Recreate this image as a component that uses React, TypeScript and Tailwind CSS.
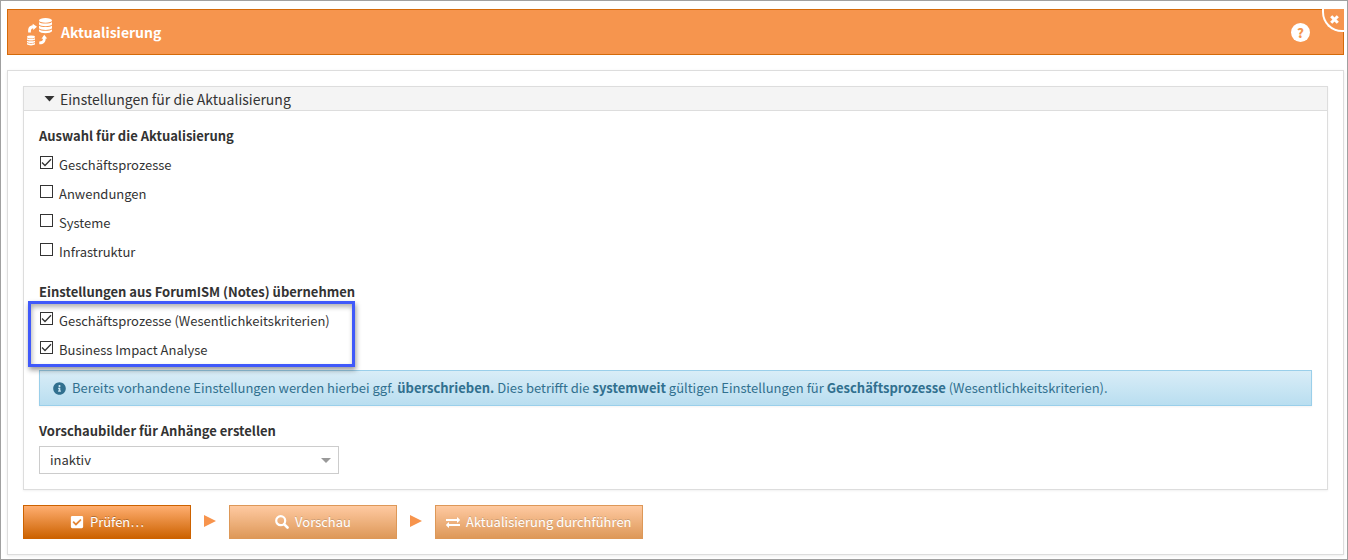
import React, { useState } from "react";
import { FaCheckSquare, FaInfoCircle } from "react-icons/fa";

const assets = ["Geschäftsprozesse", "Anwendungen", "Systeme", "Infrastruktur"];
const notesSettings = ["Geschäftsprozesse (Wesentlichkeitskriterien)", "Business Impact Analyse"];

function DatabaseSyncIcon() {
    return (
        <svg width="26" height="28" viewBox="0 0 26 28" fill="#fff" aria-hidden="true">
            <ellipse cx="18.5" cy="2.4" rx="6.5" ry="2.4" />
            <path d="M12 3.900c1.500 2 11.500 2 13 0v2.700c-1.500 2.300-11.500 2.300-13 0z" />
            <path d="M12 7.600c1.500 2 11.500 2 13 0v2.700c-1.500 2.300-11.500 2.300-13 0z" />
            <path d="M12 11.300c1.500 2 11.500 2 13 0v2c-1.500 2.600-11.500 2.600-13 0z" />
            <ellipse cx="4" cy="19" rx="4" ry="1.400" />
            <path d="M0 20c1 1.200 7 1.200 8 0v1.500c-1 1.300-7 1.300-8 0z" />
            <path d="M0 22.400c1 1.200 7 1.200 8 0v1.500c-1 1.300-7 1.300-8 0z" />
            <path d="M0 24.800c1 1.200 7 1.200 8 0v1.500c-1 1.500-7 1.500-8 0z" />
            <path d="M1.200 14.500c-.5-4.500 1-7 4.500-7.300V5.800l4.300 3-3.800 3.200v-1.700c-2 .2-2.500 2-2.300 4.200z" />
            <path d="M12.300 23.500c2.700 0 3.700-1.200 3.700-2.700h-1.500l2.700-4 3 3.700h-1.500c0 4-2.400 6-6.400 5.800z" />
        </svg>
    );
}

function CloseIcon() {
    return (
        <svg width="9" height="9" viewBox="0 0 9 9" fill="none" stroke="currentColor" strokeWidth="3" aria-hidden="true">
            <path d="M1.200 1.200l6.600 6.600M7.800 1.200L1.200 7.800" />
        </svg>
    );
}

function SearchIcon() {
    return (
        <svg width="14" height="14" viewBox="0 0 14 14" fill="none" stroke="currentColor" aria-hidden="true">
            <circle cx="5.700" cy="5.700" r="4.500" strokeWidth="2.200" />
            <path d="M9.300 9.300l3.200 3.200" strokeWidth="2.600" strokeLinecap="round" />
        </svg>
    );
}

function ExchangeIcon() {
    return (
        <svg width="14" height="14" viewBox="0 0 1792 1792" fill="currentColor" aria-hidden="true">
            <path d="M1792 1184v192q0 13-9.500 22.500t-22.500 9.500h-1376v192q0 13-9.500 22.500t-22.500 9.500q-12 0-24-10l-319-320q-9-9-9-22 0-14 9-23l320-320q9-9 23-9 13 0 22.500 9.500t9.500 22.500v192h1376q13 0 22.500 9.500t9.500 22.500zm0-544q0 14-9 23l-320 320q-9 9-23 9-13 0-22.500-9.500t-9.500-22.500v-192h-1376q-13 0-22.500-9.500t-9.500-22.500v-192q0-13 9.500-22.500t22.500-9.500h1376v-192q0-14 9-23t23-9q12 0 24 10l319 319q9 9 9 23z" />
        </svg>
    );
}

function StepArrow() {
    return (
        <svg width="12" height="12" viewBox="0 0 12 12" fill="#f7944d" className="mx-[13px] mb-0.5 shrink-0" aria-hidden="true">
            <path d="M0 0l12 6-12 6z" />
        </svg>
    );
}

function CheckRow({ label, checked, onChange }: { label: string, checked: boolean, onChange: () => void }) {
    return (
        <label className="flex h-[29px] w-fit gap-1.5 pl-px">
            <span className="mt-[5px] grid size-[13px]">
                <input
                    type="checkbox"
                    className="col-start-1 row-start-1 size-[13px] appearance-none border border-[#333] bg-white"
                    checked={checked}
                    onChange={onChange}
                />
                {checked ? (
                    <svg width="13" height="13" viewBox="0 0 13 13" fill="none" stroke="#333" strokeWidth="1.300" className="pointer-events-none col-start-1 row-start-1">
                        <path d="M2 6.500l3 3 6-6.200" />
                    </svg>
                ) : null}
            </span>
            <span className="leading-[27px]">{label}</span>
        </label>
    );
}

export default function App() {
    const [selected, setSelected] = useState<string[]>([assets[0], ...notesSettings]);
    const [preview, setPreview] = useState("inaktiv");

    const toggle = (name: string) => {
        setSelected(selected.includes(name) ? selected.filter((s) => s !== name) : [...selected, name]);
    };

    const renderRow = (name: string) => (
        <CheckRow key={name} label={name} checked={selected.includes(name)} onChange={() => toggle(name)} />
    );

    return (
        <div className="border border-[#a0a0a0] bg-white px-1.5 pt-2 pb-1 pr-[3px] font-['Noto_Sans_CJK_SC','Open_Sans',sans-serif] text-[13px] leading-5 text-[#333]">
            <header className="relative flex h-[46px] items-center border border-[#d46a0a] bg-[#f6954e] pl-[19px] text-white">
                <DatabaseSyncIcon />
                <h1 className="ml-2 text-sm font-bold">Aktualisierung</h1>
                <button type="button" aria-label="Hilfe" className="mr-[33px] ml-auto size-[19px] rounded-full bg-white text-[13px] leading-[19px] font-black text-[#f6954e]">
                    ?
                </button>
                <button type="button" aria-label="Schließen" className="absolute -top-px -right-px flex h-[23px] w-[22px] items-center justify-center rounded-bl-[20px] border-b-2 border-l-2 border-white bg-[#f6954e]">
                    <CloseIcon />
                </button>
            </header>

            <main className="mt-[15px] border border-[#ddd] p-[15px] shadow-[0_1px_3px_rgba(0,0,0,0.08)]">
                <section className="border border-[#ddd] shadow-[0_1px_2px_rgba(0,0,0,0.06)]">
                    <h2 className="border-b border-[#ddd] bg-[#f4f4f4]">
                        <button type="button" className="flex h-[23px] w-full items-center gap-[5px] pl-5 text-sm">
                            <svg width="11" height="6" viewBox="0 0 11 6" fill="#333" aria-hidden="true">
                                <path d="M0.500 0h10l-5 5.500z" />
                            </svg>
                            Einstellungen für die Aktualisierung
                        </button>
                    </h2>
                    <div className="p-[15px]">
                        <h3 className="mb-[5px] font-bold">Auswahl für die Aktualisierung</h3>
                        {assets.map(renderRow)}

                        <h3 className="mt-[15px] mb-[5px] font-bold">Einstellungen aus ForumISM (Notes) übernehmen</h3>
                        <div className="relative">
                            {notesSettings.map(renderRow)}
                            <div className="pointer-events-none absolute -top-1.5 -left-[11px] h-[66px] w-[327px] border-3 border-[#4059fa] shadow-[1px_3px_5px_rgba(0,0,0,0.4),inset_1px_3px_5px_rgba(0,0,0,0.3)]" />
                        </div>

                        <div role="note" className="mt-[5px] flex min-h-9 items-center gap-1.5 border border-[#9acfea] bg-linear-to-b/srgb from-[#d9edf7] to-[#b9def0] px-[13px] text-[#31708f] shadow-[0_1px_2px_rgba(0,0,0,0.05)]">
                            <FaInfoCircle size={13} className="shrink-0" />
                            <p>
                                Bereits vorhandene Einstellungen werden hierbei ggf. <b>überschrieben.</b> Dies betrifft die <b>systemweit</b> gültigen Einstellungen für <b>Geschäftsprozesse</b> (Wesentlichkeitskriterien).
                            </p>
                        </div>

                        <label htmlFor="preview" className="mt-[15px] mb-[5px] block font-bold">Vorschaubilder für Anhänge erstellen</label>
                        <div className="grid w-[300px] items-center">
                            <select
                                id="preview"
                                className="col-start-1 row-start-1 h-7 appearance-none border border-[#ccc] bg-white px-2.5"
                                value={preview}
                                onChange={(e) => setPreview(e.target.value)}
                            >
                                <option>inaktiv</option>
                                <option>aktiv</option>
                            </select>
                            <svg width="10" height="5" viewBox="0 0 10 5" fill="#999" className="pointer-events-none col-start-1 row-start-1 mr-2 justify-self-end" aria-hidden="true">
                                <path d="M0 0h10L5 5z" />
                            </svg>
                        </div>
                    </div>
                </section>

                <div className="mt-[15px] flex items-center">
                    <button type="button" className="flex h-[34px] w-[168px] items-center justify-center gap-1.5 border border-[#cc6200] bg-linear-to-b/srgb from-[#ffae70] to-[#cc6200] text-white [text-shadow:0_-1px_0_rgba(0,0,0,0.25)]">
                        <FaCheckSquare size={14} />
                        Prüfen…
                    </button>
                    <StepArrow />
                    <button type="button" disabled className="flex h-[34px] w-[168px] items-center justify-center gap-1.5 border border-[#cc6200] bg-linear-to-b/srgb from-[#ffae70] to-[#cc6200] text-white opacity-65 [text-shadow:0_-1px_0_rgba(0,0,0,0.25)]">
                        <SearchIcon />
                        Vorschau
                    </button>
                    <StepArrow />
                    <button type="button" disabled className="flex h-[34px] items-center justify-center gap-1.5 border border-[#cc6200] bg-linear-to-b/srgb from-[#ffae70] to-[#cc6200] px-2.5 text-white opacity-65 [text-shadow:0_-1px_0_rgba(0,0,0,0.25)]">
                        <ExchangeIcon />
                        Aktualisierung durchführen
                    </button>
                </div>
            </main>
        </div>
    );
}
